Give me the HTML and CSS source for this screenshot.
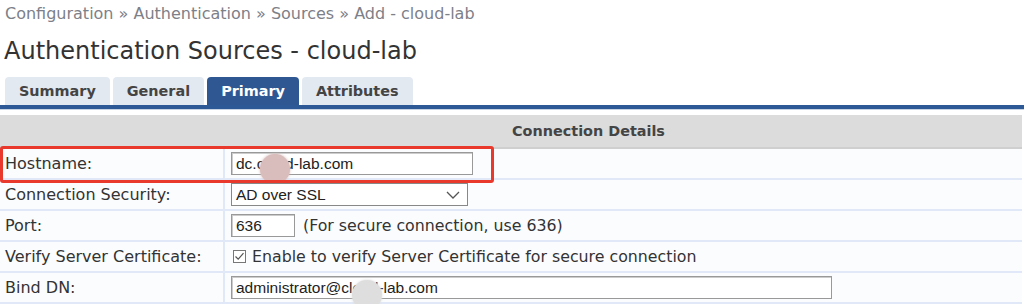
FILE: index.html
```html
<!DOCTYPE html>
<html lang="en">
<head>
  <meta charset="UTF-8">
  <title>Authentication Sources - cloud-lab</title>
  <link rel="stylesheet" href="styles.css">
</head>
<body>
  <div class="breadcrumb">Configuration &raquo; Authentication &raquo; Sources &raquo; Add - cloud-lab</div>
  <h1>Authentication Sources - cloud-lab</h1>

  <div class="tabs">
    <div class="tab">Summary</div>
    <div class="tab">General</div>
    <div class="tab active">Primary</div>
    <div class="tab">Attributes</div>
  </div>
  <div class="tab-bar"></div>

  <div class="details">
    <div class="details-head">Connection Details</div>

    <div class="row highlight">
      <div class="label">Hostname:</div>
      <div class="value">
        <div class="field wide">dc.cloud-lab.com<span class="blur pink"></span></div>
      </div>
    </div>

    <div class="row">
      <div class="label">Connection Security:</div>
      <div class="value">
        <div class="field select">AD over SSL
          <svg class="chevron" width="14" height="8" viewBox="0 0 14 8"><path d="M1 1 L7 7 L13 1" fill="none" stroke="#555" stroke-width="1.3"/></svg>
        </div>
      </div>
    </div>

    <div class="row">
      <div class="label">Port:</div>
      <div class="value">
        <div class="field port">636</div>
        <span class="note">(For secure connection, use 636)</span>
      </div>
    </div>

    <div class="row">
      <div class="label">Verify Server Certificate:</div>
      <div class="value">
        <svg class="check" width="13" height="13" viewBox="0 0 13 13"><rect x="0.5" y="0.5" width="12" height="12" fill="#fff" stroke="#777"/><path d="M2.5 6.5 L5.2 9.2 L10.5 3.2" fill="none" stroke="#555" stroke-width="1.2"/></svg>
        <span class="note">Enable to verify Server Certificate for secure connection</span>
      </div>
    </div>

    <div class="row">
      <div class="label">Bind DN:</div>
      <div class="value">
        <div class="field bind">administrator@cloud-lab.com<span class="blur grey"></span></div>
      </div>
    </div>
  </div>
</body>
</html>
```

FILE: styles.css
```css
html, body {
  margin: 0;
  padding: 0;
  background: #fff;
  font-family: "DejaVu Sans", sans-serif;
  color: #333;
}

.breadcrumb {
  padding: 4px 0 0 5px;
  height: 19px;
  font-size: 16px;
  line-height: 19px;
  color: #7d8088;
}

h1 {
  margin: 13px 0 0 4px;
  height: 30px;
  font-size: 24px;
  font-weight: normal;
  line-height: 30px;
  color: #333;
}

.tabs {
  display: flex;
  gap: 3px;
  margin: 11px 0 0 5px;
  height: 28px;
}

.tab {
  padding: 0 14px;
  height: 28px;
  line-height: 29px;
  font-size: 14.4px;
  font-weight: bold;
  color: #444;
  background: #e3e9f1;
  border-radius: 4px 4px 0 0;
}

.tab.active {
  background: #2f5893;
  color: #fff;
}

.tab-bar {
  height: 4px;
  background: #2d5a96;
  border-bottom: 1px solid #c8d3e3;
}

.details {
  position: relative;
  margin: 5px 2px 0 0;
}

.details-head {
  height: 32px;
  line-height: 33px;
  text-align: center;
  padding-left: 155px;
  font-size: 14.4px;
  font-weight: bold;
  color: #444;
  background: #dcdcdc;
  border-bottom: 2px solid #cfcfcf;
}

.row {
  display: flex;
  height: 29px;
  background: #fbfcfe;
  border-bottom: 2px solid #e1e8f7;
}

.row:first-of-type {
  height: 31px;
}

.label {
  width: 218px;
  padding-left: 5px;
  line-height: 30px;
  font-size: 16px;
  color: #333;
  border-right: 2px solid #e1e8f7;
}

.value {
  display: flex;
  align-items: center;
  gap: 8px;
  padding-left: 6px;
}

.field {
  position: relative;
  box-sizing: border-box;
  height: 23px;
  padding: 0 4px;
  line-height: 21px;
  font-family: "Liberation Sans", Arial, sans-serif;
  font-size: 15.5px;
  color: #222;
  background: #fff;
  border: 1px solid #999;
  box-shadow: inset 1px 1px 0 #ccc;
}

.field.wide {
  width: 242px;
}

.field.select {
  width: 237px;
  box-shadow: none;
  border-color: #888;
}

.field.port {
  width: 64px;
}

.field.bind {
  width: 601px;
}

.chevron {
  position: absolute;
  right: 7px;
  top: 7px;
}

.note {
  font-size: 15.8px;
  color: #333;
}

.check {
  margin-left: 2px;
  margin-right: -2px;
}

.highlight {
  position: relative;
}

.highlight::after {
  content: "";
  position: absolute;
  left: 0;
  top: -3px;
  width: 494px;
  height: 37px;
  box-sizing: border-box;
  border: 3px solid #e8392c;
  border-radius: 3px;
}

.blur {
  position: absolute;
  border-radius: 50%;
  width: 30px;
  height: 30px;
}

.blur.pink {
  left: 28px;
  top: 1px;
  background: #d9bcbc;
  box-shadow: 0 0 3px #d9bcbc;
}

.blur.grey {
  left: 120px;
  top: 3px;
  background: #dedede;
  box-shadow: 0 0 3px #dedede;
}
```
